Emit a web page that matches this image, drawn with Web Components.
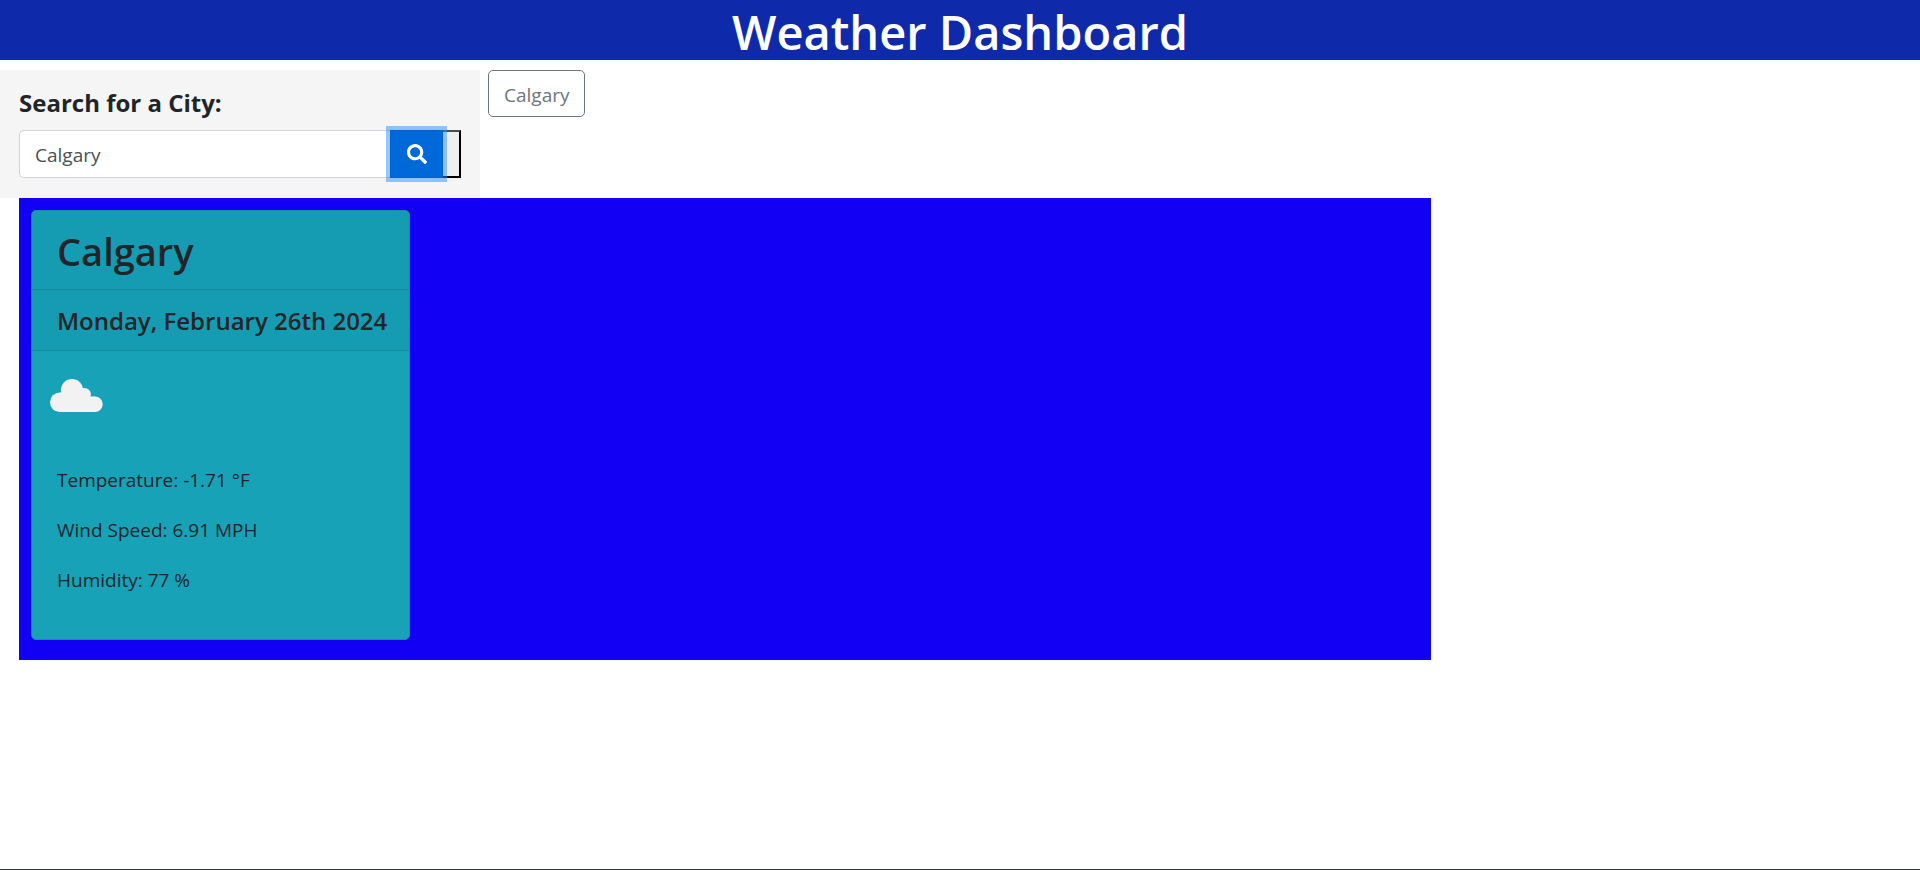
<!DOCTYPE html>
<html lang="en">
<head>
<meta charset="utf-8">
<meta name="viewport" content="width=device-width, initial-scale=1">
<title>Weather Dashboard</title>
<style>
html, body { margin: 0; min-height: 100%; }
body { background: #fff; color: #212529; font: 19px/30px "Open Sans", "Noto Sans", sans-serif; }
</style>
</head>
<body>
<weather-app></weather-app>
<script>
function define(name, html) {
  const template = document.createElement('template');
  template.innerHTML = html;
  customElements.define(name, class extends HTMLElement {
    constructor() {
      super();
      this.attachShadow({ mode: 'open' }).append(template.content.cloneNode(true));
    }
  });
}

define('page-banner', `
<style>
:host { display: block; background: #0e2aab; color: #fff; text-align: center; }
h1 { margin: 0; padding-top: 4px; font-size: 47px; line-height: 56px; font-weight: 600; }
</style>
<h1><slot></slot></h1>`);

define('city-search', `
<style>
:host { display: block; box-sizing: border-box; background: #f5f5f5; padding: 15px 19px 20px; }
label { display: block; font-size: 24px; line-height: 36px; font-weight: 700; margin-bottom: 9px; }
.group { display: flex; height: 48px; }
input { flex: 1; min-width: 0; box-sizing: border-box; margin: 0; padding: 2px 15px 0; border: 1px solid #ced4da; border-right: 0; border-radius: 5px 0 0 5px; background: #fff; color: #495057; font: inherit; outline: 0; }
button { position: relative; display: grid; place-items: center; width: 53px; margin: 0; padding: 0; border: 1px solid #0062cc; background: #0069d9; color: #fff; box-shadow: 0 0 0 4px rgba(38, 143, 255, .5); }
svg { width: 20px; height: 20px; }
.edge { box-sizing: border-box; width: 18px; background: #efefef; border: 2px solid #000; border-top-color: #4c4c4c; border-left: 0; }
</style>
<form>
<label for="city">Search for a City:</label>
<div class="group">
<input id="city" type="text" value="Calgary">
<button type="button" aria-label="Search"><svg viewBox="0 0 512 512" fill="currentColor" aria-hidden="true"><path d="M505 442.700 405.300 343c-4.500-4.500-10.600-7-17-7H372c27.600-35.300 44-79.700 44-128C416 93.100 322.900 0 208 0S0 93.100 0 208s93.100 208 208 208c48.300 0 92.700-16.400 128-44v16.300c0 6.400 2.500 12.500 7 17l99.700 99.700c9.400 9.400 24.600 9.400 33.900 0l28.300-28.300c9.400-9.400 9.400-24.600.1-34zM208 336c-70.700 0-128-57.200-128-128 0-70.700 57.200-128 128-128 70.700 0 128 57.200 128 128 0 70.700-57.200 128-128 128z"/></svg></button>
<span class="edge"></span>
</div>
</form>`);

define('history-button', `
<style>
:host { display: block; }
button { display: block; box-sizing: border-box; height: 47px; margin: 0; padding: 2px 15px 0; border: 1px solid #6c757d; border-radius: 5px; background: transparent; color: #6c757d; font: inherit; }
</style>
<button type="button"><slot></slot></button>`);

define('weather-card', `
<style>
:host { display: block; box-sizing: border-box; width: 379px; overflow: hidden; background: #17a2b8; border: 1px solid #148ea1; border-radius: 5px; }
h2, h3 { margin: 0; padding: 16px 25px 14px; background: rgba(0, 0, 0, .03); border-bottom: 1px solid rgba(0, 0, 0, .125); font-weight: 600; white-space: nowrap; }
h2 { font-size: 38px; line-height: 48px; }
h3 { font-size: 24px; line-height: 30px; }
svg { display: block; width: 54px; height: 34px; margin: 28px 18px 32px; }
.readings { display: grid; gap: 20px; padding: 20px 25px 44px; }
::slotted(p) { margin: 0; }
</style>
<h2><slot name="city"></slot></h2>
<h3><slot name="date"></slot></h3>
<svg viewBox="0 0 54 34" fill="#f2f2f2" role="img" aria-label="Cloudy"><circle cx="9.800" cy="23.200" r="9.800"/><circle cx="22" cy="11" r="11"/><circle cx="34.300" cy="15.500" r="6.600"/><circle cx="45" cy="25.300" r="7.700"/><path d="M10 13.400h30v4.200h5V33H10z"/></svg>
<div class="readings"><slot></slot></div>`);

define('weather-app', `
<style>
:host { display: block; box-sizing: border-box; min-height: 100vh; border-bottom: 1px solid #343a40; }
.top { display: flex; gap: 8px; margin-top: 10px; }
city-search { width: 25%; }
.current { margin-left: 19px; width: calc(75% - 28px); box-sizing: border-box; padding: 12px 12px 20px; background: #1100f3; }
</style>
<page-banner>Weather Dashboard</page-banner>
<div class="top">
<city-search></city-search>
<history-button>Calgary</history-button>
</div>
<main class="current">
<weather-card>
<span slot="city">Calgary</span>
<span slot="date">Monday, February 26th 2024</span>
<p>Temperature: -1.71 °F</p>
<p>Wind Speed: 6.91 MPH</p>
<p>Humidity: 77 %</p>
</weather-card>
</main>`);
</script>
</body>
</html>
